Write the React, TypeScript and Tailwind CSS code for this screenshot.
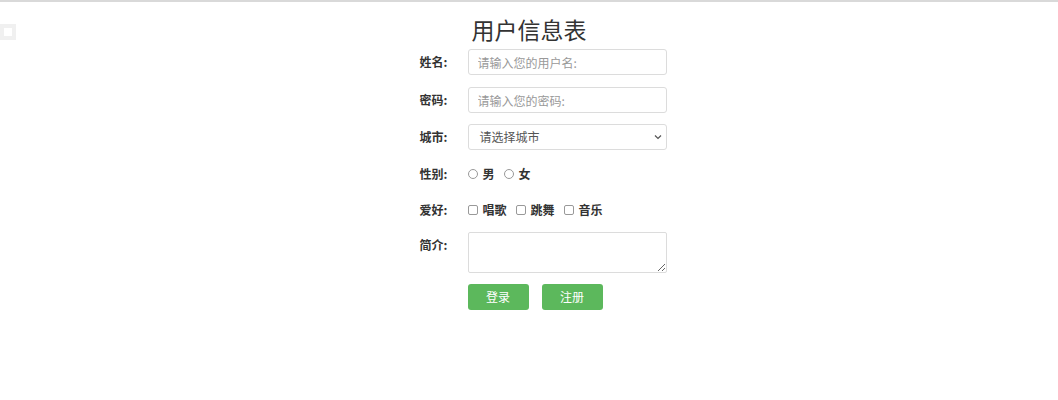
import React from "react";

function Label({ children }: { children: React.ReactNode }) {
  return (
    <div className="w-[48px] shrink-0 text-[12px] font-bold text-[#333] leading-[26px]">{children}</div>
  );
}

export default function App() {
  return (
    <div className="relative min-h-[400px] bg-white font-['Noto_Sans_CJK_SC',sans-serif]">
      <div className="h-[2px] bg-[#d9d9d9]" />
      <div className="absolute left-0 top-[24px] flex h-[16px] w-[16px] items-center justify-center bg-[#f0f0f0]">
        <div className="h-[8px] w-[8px] bg-white" />
      </div>
      <h1 className="mt-[11px] text-center text-[23px] leading-[32px] text-[#333]">用户信息表</h1>
      <div className="flex justify-center">
        <div className="w-[275px] pl-[28px]">
          <form className="mt-[4px] flex flex-col">
            <div className="flex h-[26px] items-center">
              <Label>姓名:</Label>
              <input
                className="h-[26px] w-[199px] rounded-[3px] border border-[#dcdcdc] px-[9px] text-[12px] text-[#555] outline-none placeholder:text-[#999]"
                placeholder="请输入您的用户名:"
              />
            </div>
            <div className="mt-[12px] flex h-[26px] items-center">
              <Label>密码:</Label>
              <input
                type="password"
                className="h-[26px] w-[199px] rounded-[3px] border border-[#dcdcdc] px-[9px] text-[12px] text-[#555] outline-none placeholder:text-[#999]"
                placeholder="请输入您的密码:"
              />
            </div>
            <div className="mt-[11px] flex h-[26px] items-center">
              <Label>城市:</Label>
              <div className="relative h-[26px] w-[199px] rounded-[3px] border border-[#dcdcdc] bg-white">
                <div className="pl-[11px] text-[12px] leading-[24px] text-[#555]">请选择城市</div>
                <svg className="absolute right-[4px] top-[9px]" width="8" height="6" viewBox="0 0 8 6">
                  <path d="M1 1.5 L4 4.5 L7 1.5" fill="none" stroke="#555" strokeWidth="1.2" />
                </svg>
              </div>
            </div>
            <div className="mt-[11px] flex h-[26px] items-center">
              <Label>性别:</Label>
              <div className="flex items-center text-[12px] font-bold text-[#333]">
                <span className="h-[10px] w-[10px] rounded-full border border-[#999]" />
                <span className="ml-[5px]">男</span>
                <span className="ml-[9px] h-[10px] w-[10px] rounded-full border border-[#999]" />
                <span className="ml-[5px]">女</span>
              </div>
            </div>
            <div className="mt-[10px] flex h-[26px] items-center">
              <Label>爱好:</Label>
              <div className="flex items-center text-[12px] font-bold text-[#333]">
                <span className="h-[10px] w-[10px] rounded-[2px] border border-[#999]" />
                <span className="ml-[5px]">唱歌</span>
                <span className="ml-[9px] h-[10px] w-[10px] rounded-[2px] border border-[#999]" />
                <span className="ml-[5px]">跳舞</span>
                <span className="ml-[9px] h-[10px] w-[10px] rounded-[2px] border border-[#999]" />
                <span className="ml-[5px]">音乐</span>
              </div>
            </div>
            <div className="mt-[9px] flex">
              <Label>简介:</Label>
              <textarea className="h-[41px] w-[199px] rounded-[2px] border border-[#dcdcdc] outline-none" />
            </div>
            <div className="mt-[11px] flex pl-[48px]">
              <button
                type="button"
                className="h-[26px] w-[61px] rounded-[3px] bg-[#5cb85c] text-[12px] text-white"
              >
                登录
              </button>
              <button
                type="button"
                className="ml-[13px] h-[26px] w-[61px] rounded-[3px] bg-[#5cb85c] text-[12px] text-white"
              >
                注册
              </button>
            </div>
          </form>
        </div>
      </div>
    </div>
  );
}
